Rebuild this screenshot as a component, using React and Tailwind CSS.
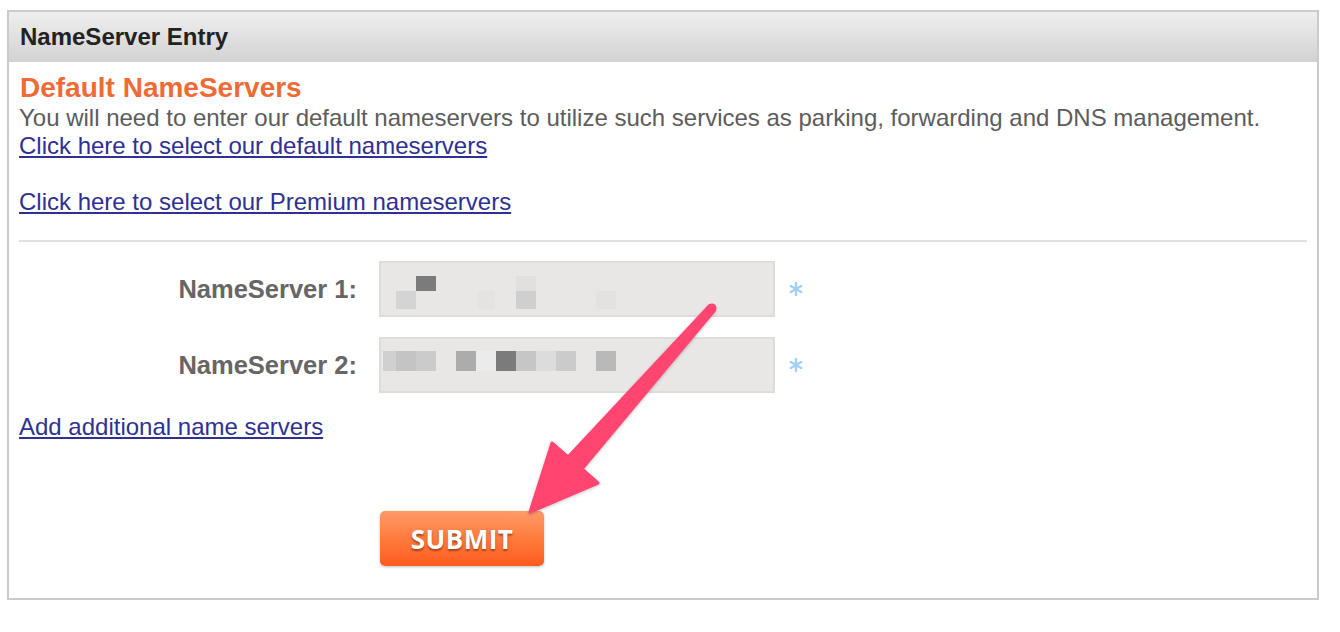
import React from "react";

const font = { fontFamily: '"Liberation Sans", Arial, sans-serif' };

// blurred (pixelated) values inside the inputs
const ns1 = [
  { x: 35, y: 13, w: 20, h: 15, c: "#7b7b7b" },
  { x: 15, y: 28, w: 20, h: 18, c: "#d4d4d4" },
  { x: 96, y: 28, w: 18, h: 18, c: "#e4e3e2" },
  { x: 135, y: 13, w: 20, h: 15, c: "#e0e0e0" },
  { x: 135, y: 28, w: 20, h: 18, c: "#cfcfcf" },
  { x: 215, y: 28, w: 20, h: 18, c: "#e2e2e2" },
];

const ns2 = [
  { x: 2, y: 12, w: 13, h: 20, c: "#d0d0d0" },
  { x: 15, y: 12, w: 20, h: 20, c: "#c4c4c4" },
  { x: 35, y: 12, w: 20, h: 20, c: "#cbcbcb" },
  { x: 75, y: 12, w: 20, h: 20, c: "#acacac" },
  { x: 95, y: 12, w: 20, h: 20, c: "#ebebeb" },
  { x: 115, y: 12, w: 20, h: 20, c: "#7b7b7b" },
  { x: 135, y: 12, w: 20, h: 20, c: "#c6c6c6" },
  { x: 155, y: 12, w: 20, h: 20, c: "#dcdcdc" },
  { x: 175, y: 12, w: 20, h: 20, c: "#cbcbcb" },
  { x: 215, y: 12, w: 20, h: 20, c: "#b9b9b9" },
];

const Required = () => (
  <svg width="14" height="14" viewBox="0 0 14 14" className="ml-[14px]">
    <g stroke="#a3cff2" strokeWidth="2.4" strokeLinecap="round">
      <line x1="7" y1="1" x2="7" y2="13" />
      <line x1="1.8" y1="4" x2="12.2" y2="10" />
      <line x1="1.8" y1="10" x2="12.2" y2="4" />
    </g>
  </svg>
);

const NameServerRow = ({ label, blocks, h }) => (
  <div className="flex items-center">
    <label className="w-[338px] text-right font-bold text-[25.5px] text-[#666666]">
      {label}
    </label>
    <div
      className="ml-[22px] w-[396px] bg-[#e8e7e6] border-2 border-[#dfdddb]"
      style={{ height: h }}
    >
      <svg width="392" height={h - 4} className="block">
        {blocks.map((b, i) => (
          <rect key={i} x={b.x} y={b.y} width={b.w} height={b.h} fill={b.c} />
        ))}
      </svg>
    </div>
    <Required />
  </div>
);

export default function App() {
  return (
    <div className="relative w-[1340px] h-[632px] bg-white" style={font}>
      <div className="ml-[7px] mt-[10px] w-[1312px] border-2 border-[#cbcbcb]">
        {/* header */}
        <div className="h-[50px] flex items-center pl-[11px] bg-gradient-to-b from-[#efefef] to-[#d2d2d2]">
          <h2 className="text-[24px] font-bold text-[#222222]">NameServer Entry</h2>
        </div>

        {/* body */}
        <div className="px-[10px] pt-[12px] pb-[32px] text-[24px] leading-[28px]">
          <h3 className="pl-[1px] text-[28px] font-bold text-[#ef6b35]">Default NameServers</h3>
          <p className="mt-[2px] text-[#5c5c5c]">
            You will need to enter our default nameservers to utilize such services as parking, forwarding and DNS management.
          </p>
          <a href="#" className="block text-[#2e3192] underline">
            Click here to select our default nameservers
          </a>
          <a href="#" className="block mt-[28px] text-[#2e3192] underline">
            Click here to select our Premium nameservers
          </a>

          <hr className="mt-[24px] border-t-2 border-[#e1e1e1]" />

          <div className="mt-[19px] flex flex-col gap-[20px]">
            <NameServerRow label="NameServer 1:" blocks={ns1} h={56} />
            <NameServerRow label="NameServer 2:" blocks={ns2} h={56} />
          </div>

          <a href="#" className="block mt-[20px] text-[#2e3192] underline">
            Add additional name servers
          </a>

          <div className="mt-[70px] pl-[361px]">
            <button
              className="w-[164px] h-[55px] rounded-[5px] bg-gradient-to-b from-[#ff9a68] via-[#ff7a3c] to-[#ff5a1c] shadow-[0_1px_3px_rgba(0,0,0,0.25)] text-white font-bold text-[26px] tracking-[0.5px]"
              style={{
                fontFamily: '"Open Sans", "Liberation Sans", sans-serif',
                textShadow: "0 2px 2px rgba(90,30,0,0.55)",
              }}
            >
              SUBMIT
            </button>
          </div>
        </div>
      </div>

      {/* annotation arrow */}
      <svg
        className="absolute left-0 top-0 pointer-events-none"
        width="1340"
        height="632"
      >
        <defs>
          <filter id="sh" x="-20%" y="-20%" width="140%" height="140%">
            <feDropShadow dx="0" dy="1" stdDeviation="1.5" floodColor="#000" floodOpacity="0.25" />
          </filter>
        </defs>
        <polygon
          points="709.4,295.7 568,447 552,433 530,502 598,473 582,459 714.6,300.3"
          fill="#ff4470"
          stroke="#ff4470"
          strokeWidth="3"
          strokeLinejoin="round"
          filter="url(#sh)"
        />
        <circle cx="712" cy="298" r="4.5" fill="#ff4470" />
      </svg>
    </div>
  );
}
